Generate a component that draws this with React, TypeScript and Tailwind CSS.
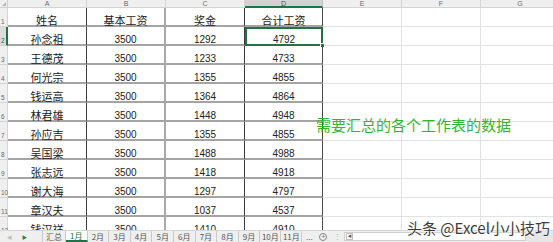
import React from "react";

const CJK = '"Noto Sans CJK SC", "Noto Sans", sans-serif';
const NUM = '"Liberation Sans", Arial, sans-serif';

const rows: [string, string, string, string][] = [
  ["姓名", "基本工资", "奖金", "合计工资"],
  ["孙念祖", "3500", "1292", "4792"],
  ["王德茂", "3500", "1233", "4733"],
  ["何光宗", "3500", "1355", "4855"],
  ["钱运高", "3500", "1364", "4864"],
  ["林君雄", "3500", "1448", "4948"],
  ["孙应吉", "3500", "1355", "4855"],
  ["吴国梁", "3500", "1488", "4988"],
  ["张志远", "3500", "1418", "4918"],
  ["谢大海", "3500", "1297", "4797"],
  ["章汉夫", "3500", "1037", "4537"],
  ["钱汉祥", "3500", "1410", "4910"],
];

const letters = ["A", "B", "C", "D", "E", "F", "G"];
const vBorder = [
  "border-r border-r-[#3c3c3c]",
  "border-r-2 border-r-[#a9a9a9]",
  "border-r border-r-[#3c3c3c]",
  "border-r border-r-[#4a4a4a]",
];

const tabs = ["汇总", "1月", "2月", "3月", "4月", "5月", "6月", "7月", "8月", "9月", "10月", "11月"];

export default function App() {
  return (
    <div className="relative w-[553px] h-[242px] overflow-hidden bg-white flex flex-col" style={{ fontFamily: CJK }}>
      <div className="relative h-[230px] overflow-hidden">
        <div className="grid grid-cols-[8px_79px_79px_79px_78px_79px_79px_79px] grid-rows-[8px_repeat(12,19px)] w-[560px]">
          {/* header row */}
          <div className="bg-[#efefef] border-r border-b border-[#d0d0d0] relative">
            <div className="absolute right-[1px] bottom-[1px] w-0 h-0 border-l-[4px] border-l-transparent border-b-[4px] border-b-[#b8b8b8]" />
          </div>
          {letters.map((l, i) => (
            <div
              key={l}
              className={
                i === 3
                  ? "bg-[#d3d3d3] border-r border-[#c0c0c0] border-b-2 border-b-[#217346] flex items-center justify-center text-[7px] leading-[7px] text-[#1e5e38]"
                  : "bg-[#efefef] border-r border-b border-[#d4d4d4] flex items-center justify-center text-[7px] leading-[7px] text-[#6a6a6a]"
              }
              style={{ fontFamily: NUM }}
            >
              {l}
            </div>
          ))}
          {rows.map((r, ri) => (
            <React.Fragment key={ri}>
              <div
                className={
                  ri === 1
                    ? "bg-[#dcdcdc] border-r-2 border-r-[#217346] border-b border-b-[#d0d0d0] flex items-end pl-[1px] pb-[1px] text-[6.5px] leading-[7px] text-[#217346]"
                    : "bg-[#efefef] border-r border-b border-[#d4d4d4] flex items-end pl-[1px] pb-[1px] text-[6.5px] leading-[7px] text-[#6a6a6a]"
                }
                style={{ fontFamily: NUM }}
              >
                {ri + 1}
              </div>
              {r.map((c, ci) => {
                const isNum = /^\d+$/.test(c);
                const sel = ri === 1 && ci === 3;
                return (
                  <div
                    key={ci}
                    className={
                      "relative flex items-end justify-center " +
                      (sel
                        ? "border-2 border-[#217346]"
                        : vBorder[ci] + " border-b-2 border-b-[#a4a4a4]")
                    }
                  >
                    <span
                      className={
                        isNum
                          ? "text-[10px] leading-[10px] mb-[-1px] text-[#222]"
                          : "text-[11px] leading-[11px] mb-[-1px] text-[#1a1a1a]"
                      }
                      style={{ fontFamily: isNum ? NUM : CJK }}
                    >
                      {c}
                    </span>
                    {sel && (
                      <div className="absolute right-[-4px] bottom-[-4px] w-[5px] h-[5px] bg-[#217346] border border-white" />
                    )}
                  </div>
                );
              })}
              {[0, 1, 2].map((k) => (
                <div key={"e" + k} className="border-r border-b border-[#e2e2e2]" />
              ))}
            </React.Fragment>
          ))}
        </div>
        <div className="absolute left-[316px] top-[116px] text-[15px] leading-[18px] text-[#33b433] whitespace-nowrap">
          需要汇总的各个工作表的数据
        </div>
      </div>
      <div className="h-[12px] bg-[#efefef] border-t border-[#d6d6d6] flex items-stretch text-[8px] leading-[11px] text-[#555] relative">
        <div className="w-[43px] flex items-center border-r border-[#c8c8c8]">
          <span className="ml-[7px] text-[5px] text-[#bdbdbd]">◀</span>
          <span className="ml-[10px] text-[5px] text-[#3a7a3a]">▶</span>
        </div>
        {tabs.map((t, i) => (
          <div
            key={t}
            className={
              (i === 0 ? "w-[23px] " : i >= 10 ? "w-[21px] " : "w-[21.6px] ") +
              (i === 1
                ? "bg-white text-[#217346] border-b-2 border-b-[#217346] "
                : "") +
              "flex items-center justify-center border-r border-[#c8c8c8] whitespace-nowrap"
            }
          >
            {t}
          </div>
        ))}
        <div className="w-[14px] flex items-center justify-center text-[#666]">...</div>
        <div className="w-[14px] flex items-center justify-center">
          <div className="w-[8px] h-[8px] rounded-full border border-[#888] flex items-center justify-center text-[7px] leading-[7px] text-[#777]">+</div>
        </div>
        <div className="w-[14px] flex items-center justify-center text-[#aaa] text-[7px]">⋮</div>
        <div className="w-[182px] my-[1px] bg-white border border-[#d0d0d0] flex items-center">
          <div className="w-[7px] h-[7px] ml-[1px] border border-[#c0c0c0] flex items-center justify-center text-[4px] text-[#555]">◀</div>
        </div>
        <div className="flex-1 bg-[#e6e6e6]" />
      </div>
      <div
        className="absolute left-[407px] top-[218px] text-[15px] leading-[20px] text-[#3d3d3d] whitespace-nowrap"
        style={{ textShadow: "0 0 2px #fff, 0 0 2px #fff, 0 0 1px #fff" }}
      >
        头条 @Excel小小技巧
      </div>
    </div>
  );
}
